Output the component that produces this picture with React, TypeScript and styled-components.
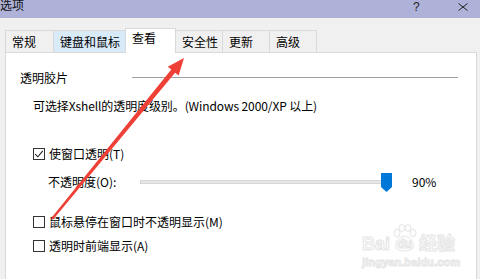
import React from "react";
import styled, { createGlobalStyle } from "styled-components";

const GlobalStyle = createGlobalStyle`
  html, body {
    margin: 0;
    padding: 0;
    background: #f0f0f0;
  }
  body {
    font-family: "Noto Sans CJK SC", "Noto Sans", sans-serif;
    font-size: 12px;
    color: #000;
  }
`;

const Window = styled.div`
  position: relative;
  width: 480px;
  height: 279px;
  overflow: hidden;
  background: #f0f0f0;
  display: flex;
  flex-direction: column;
`;

const TitleBar = styled.div`
  height: 18px;
  flex: none;
  background: #aeb1d8;
  display: flex;
  align-items: flex-start;
`;

const Title = styled.span`
  line-height: 12px;
  margin-top: -1px;
  font-size: 12px;
  color: #111;
`;

const TitleButtons = styled.div`
  margin-left: auto;
  display: flex;
  align-items: center;
  height: 13px;
`;

const HelpButton = styled.span`
  width: 10px;
  margin-right: 35px;
  font-family: "Liberation Sans", sans-serif;
  font-size: 12px;
  line-height: 12px;
  color: #222;
`;

const CloseButton = styled.svg`
  width: 10px;
  height: 8px;
  margin-right: 12px;
`;

const Body = styled.div`
  flex: 1;
  display: flex;
  flex-direction: column;
  padding-left: 5px;
`;

const TabRow = styled.div`
  margin-top: 10px;
  height: 24px;
  display: flex;
  align-items: flex-end;
`;

const Tab = styled.div<{ $w: number; $active?: boolean; $hover?: boolean }>`
  position: relative;
  box-sizing: border-box;
  width: ${({ $w }) => $w}px;
  height: ${({ $active }) => ($active ? 25 : 22)}px;
  margin-left: -1px;
  margin-bottom: ${({ $active }) => ($active ? -1 : 0)}px;
  z-index: ${({ $active }) => ($active ? 2 : 1)};
  padding: ${({ $active }) => ($active ? "1px" : "3px")} 0 0 6px;
  line-height: 16px;
  border: 1px solid #d9d9d9;
  border-bottom: none;
  background: ${({ $active, $hover }) =>
    $active ? "#ffffff" : $hover ? "#d8e9f8" : "#f0f0f0"};
  white-space: nowrap;

  &:first-child {
    margin-left: 0;
  }
`;

const Panel = styled.div`
  flex: 1;
  box-sizing: border-box;
  width: 472px;
  border: 1px solid #d9d9d9;
  border-bottom: none;
  background: #fff;
  display: flex;
  flex-direction: column;
  padding: 17px 0 0 14px;
`;

const GroupHeader = styled.div`
  height: 16px;
  display: flex;
  line-height: 16px;
`;

const GroupRule = styled.div`
  width: 326px;
  height: 1px;
  margin: 7px 0 0 64px;
  background: #a0a0a0;
`;

const Description = styled.div`
  margin: 12px 0 0 13px;
  line-height: 16px;
  white-space: nowrap;
  letter-spacing: -0.1px;
`;

const CheckRow = styled.label<{ $top: number }>`
  margin: ${({ $top }) => $top}px 0 0 13px;
  height: 16px;
  display: flex;
  align-items: center;
  gap: 4px;
  line-height: 16px;
  white-space: nowrap;
`;

const Box = styled.span`
  box-sizing: border-box;
  width: 12px;
  height: 12px;
  border: 1px solid #333;
  background: #fff;
  display: flex;
  align-items: center;
  justify-content: center;
`;

const SliderRow = styled.div`
  margin: 10px 0 0 28px;
  height: 20px;
  display: flex;
  align-items: center;
`;

const SliderLabel = styled.span`
  width: 92px;
  line-height: 16px;
  white-space: nowrap;
`;

const Track = styled.div`
  position: relative;
  width: 252px;
  height: 20px;
  display: flex;
  align-items: center;
`;

const TrackLine = styled.div`
  box-sizing: border-box;
  width: 246px;
  height: 4px;
  background: #e7e7e7;
  border: 1px solid #d6d6d6;
`;

const Thumb = styled.svg`
  position: absolute;
  left: 241px;
  top: 0;
  width: 11px;
  height: 20px;
`;

const SliderValue = styled.span`
  margin-left: 20px;
  line-height: 16px;
`;

const Watermark = styled.div`
  position: absolute;
  left: 362px;
  top: 224px;
  display: flex;
  flex-direction: column;
  align-items: flex-start;
  pointer-events: none;
  color: #fcfcfc;
  -webkit-text-stroke: 1px #e6e6e6;
  font-family: "Liberation Sans", "Noto Sans CJK SC", sans-serif;
  font-weight: bold;
`;

const MarkLine = styled.div`
  display: flex;
  align-items: flex-end;
  height: 29px;
  font-size: 18px;
  line-height: 18px;
`;

const Paw = styled.span`
  position: relative;
  width: 29px;
  height: 29px;
  display: flex;
  align-items: flex-end;
  justify-content: center;
  font-size: 12px;
  line-height: 14px;

  svg {
    position: absolute;
    inset: 0;
  }
  span {
    position: relative;
    margin-bottom: 2px;
  }
`;

const MarkSite = styled.div`
  margin-top: 4px;
  font-size: 11px;
  line-height: 11px;
  letter-spacing: 0.1px;
`;

const ArrowLayer = styled.svg`
  position: absolute;
  left: 0;
  top: 0;
  width: 480px;
  height: 279px;
  pointer-events: none;
  z-index: 5;
`;

const tabs = [
  { label: "常规", w: 49 },
  { label: "键盘和鼠标", w: 73, hover: true },
  { label: "查看", w: 51, active: true },
  { label: "安全性", w: 48 },
  { label: "更新", w: 48 },
  { label: "高级", w: 48 },
];

const CheckBox = ({ checked }: { checked?: boolean }) => (
  <Box>
    {checked && (
      <svg width="10" height="10" viewBox="0 0 10 10">
        <path d="M1.2 5.2 L3.8 7.8 L8.8 1.8" fill="none" stroke="#222" strokeWidth="1.1" />
      </svg>
    )}
  </Box>
);

const App = () => {
  return (
    <Window>
      <GlobalStyle />
      <TitleBar>
        <Title>选项</Title>
        <TitleButtons>
          <HelpButton>?</HelpButton>
          <CloseButton viewBox="0 0 10 8">
            <path d="M0.5 0.5 L9.5 7.5 M9.5 0.5 L0.5 7.5" stroke="#222" strokeWidth="1" />
          </CloseButton>
        </TitleButtons>
      </TitleBar>
      <Body>
        <TabRow>
          {tabs.map((t) => (
            <Tab key={t.label} $w={t.w} $active={t.active} $hover={t.hover}>
              {t.label}
            </Tab>
          ))}
        </TabRow>
        <Panel>
          <GroupHeader>
            透明胶片
            <GroupRule />
          </GroupHeader>
          <Description>可选择Xshell的透明度级别。(Windows 2000/XP 以上)</Description>
          <CheckRow $top={32}>
            <CheckBox checked />
            使窗口透明(T)
          </CheckRow>
          <SliderRow>
            <SliderLabel>不透明度(O):</SliderLabel>
            <Track>
              <TrackLine />
              <Thumb viewBox="0 0 11 20">
                <path d="M0 1 H11 V15 L5.5 20 L0 15 Z" fill="#0078d7" />
              </Thumb>
            </Track>
            <SliderValue>90%</SliderValue>
          </SliderRow>
          <CheckRow $top={22}>
            <CheckBox />
            鼠标悬停在窗口时不透明显示(M)
          </CheckRow>
          <CheckRow $top={8}>
            <CheckBox />
            透明时前端显示(A)
          </CheckRow>
        </Panel>
      </Body>

      <Watermark>
        <MarkLine>
          Bai
          <Paw>
            <svg viewBox="0 0 29 29">
              <g fill="#fcfcfc" stroke="#e6e6e6" strokeWidth="1">
                <ellipse cx="7" cy="9" rx="3" ry="4" />
                <ellipse cx="12" cy="4" rx="3" ry="3.5" />
                <ellipse cx="18" cy="4" rx="3" ry="3.5" />
                <ellipse cx="23" cy="9" rx="3" ry="4" />
                <path d="M6 24 C4 18 10 12 14.5 12 C19 12 25 18 23 24 C21 28 8 28 6 24 Z" />
              </g>
            </svg>
            <span>du</span>
          </Paw>
          经验
        </MarkLine>
        <MarkSite>jingyan.baidu.com</MarkSite>
      </Watermark>

      <ArrowLayer viewBox="0 0 480 279">
        <polygon
          points="184,58 178.6,75.5 175.1,72.7 52.9,219.8 51.1,218.2 171.3,69.5 167.8,66.7"
          fill="#ee4036"
        />
      </ArrowLayer>
    </Window>
  );
};

export default App;
